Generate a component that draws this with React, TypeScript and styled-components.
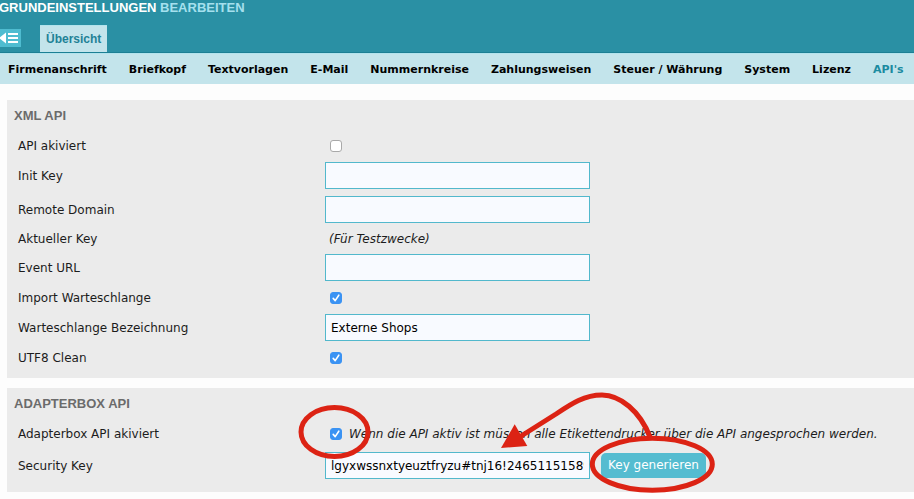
import React from "react";
import styled, { createGlobalStyle } from "styled-components";

const uiFont = `Verdana, "DejaVu Sans", sans-serif`;
const headFont = `Arial, "Liberation Sans", sans-serif`;

const GlobalStyle = createGlobalStyle`
  *, *::before, *::after { box-sizing: border-box; }
  body {
    margin: 0;
    background: #fdfdfd;
    color: #1c1c1c;
    font: 12px/16px ${uiFont};
    overflow-x: hidden;
  }
`;

const Header = styled.header`
  display: flex;
  flex-direction: column;
  gap: 10px;
  background: #2a90a4;
  border-bottom: 1px solid #1c7f94;
`;

const Title = styled.h1`
  margin: 0 0 0 -1px;
  font: bold 13px/15px ${headFont};
  color: #fff;
`;

const TitleAction = styled.span`
  color: #a5e0ee;
`;

const Toolbar = styled.div`
  display: flex;
  align-items: center;
  gap: 19px;
  height: 27px;
`;

const CollapseButton = styled.button`
  display: flex;
  width: 21px;
  height: 18px;
  margin: 0 0 1px;
  padding: 0;
  border: 0;
  background: #4fbcd0;
`;

const Tab = styled.a`
  align-self: stretch;
  padding: 0 6px;
  border: solid #b3e3ec;
  border-width: 1px 0 0;
  background: #c3e4eb;
  color: #1f8296;
  font: bold 12px/27px ${headFont};
  text-decoration: none;
`;

const SubNav = styled.nav`
  display: flex;
  gap: 22px;
  padding: 2px 8px 0;
  background: #c3e4eb;
  border-top: 1px solid #b3e3ec;
  white-space: nowrap;
`;

const NavLink = styled.a<{ $active?: boolean }>`
  color: ${(p) => (p.$active ? "#1b8ba0" : "#000")};
  font-size: 11px;
  font-weight: bold;
  line-height: 28px;
  text-decoration: none;
`;

const Content = styled.main`
  display: flex;
  flex-direction: column;
  gap: 10px;
  padding: 16px 0 7px 7px;
`;

const Panel = styled.section<{ $bottom: number }>`
  position: relative;
  padding: 0 11px ${(p) => p.$bottom}px;
  background: #ebebeb;
`;

const PanelTitle = styled.h2`
  margin: 0 -4px;
  padding-bottom: 1px;
  font: bold 13px/32px ${headFont};
  color: #6b6b6b;
`;

const rowSizes = {
  check: { height: 26, bottom: 0 },
  field: { height: 34, bottom: 1 },
  text: { height: 24, bottom: 0 },
  note: { height: 28, bottom: 2 },
};

const Row = styled.div<{ $kind: keyof typeof rowSizes }>`
  display: grid;
  grid-template-columns: 307px minmax(0, 1fr);
  align-items: center;
  min-height: ${(p) => rowSizes[p.$kind].height}px;
  padding-bottom: ${(p) => rowSizes[p.$kind].bottom}px;
`;

const Controls = styled.div`
  display: flex;
  align-items: center;
  gap: 11px;
`;

const TextInput = styled.input`
  width: 265px;
  height: 27px;
  padding: 0 5px;
  border: 1px solid #52b8cc;
  border-radius: 0;
  background: #f8faff;
  color: #000;
  font: 12px/16px ${uiFont};
`;

const CheckBox = styled.input`
  appearance: none;
  flex: none;
  width: 12px;
  height: 12px;
  margin: 0 0 0 5px;
  border: 1px solid #a9a9a9;
  border-radius: 3px;
  background: #fff;

  &:checked {
    border-color: #3b93f3;
    background: #3b93f3
      url("data:image/svg+xml,%3Csvg xmlns='http://www.w3.org/2000/svg' viewBox='0 0 10 10'%3E%3Cpath d='M2.2 5.4 4.2 7.6 7.8 2.2' fill='none' stroke='white' stroke-width='1.6' stroke-linecap='round' stroke-linejoin='round'/%3E%3C/svg%3E")
      center / 10px 10px no-repeat;
  }
`;

const Hint = styled.em<{ $beside?: boolean }>`
  margin-left: ${(p) => (p.$beside ? -4 : 4)}px;
  white-space: nowrap;
`;

const GenerateButton = styled.button`
  height: 25px;
  padding: 0 7px;
  border: 0;
  border-radius: 5px;
  background: #55bcd0;
  color: #fff;
  font: 12px/25px ${uiFont};
  white-space: nowrap;
`;

const Markup = styled.svg`
  position: absolute;
  top: 0;
  left: 283px;
  overflow: visible;
  pointer-events: none;
`;

const navItems = [
  "Firmenanschrift",
  "Briefkopf",
  "Textvorlagen",
  "E-Mail",
  "Nummernkreise",
  "Zahlungsweisen",
  "Steuer / Währung",
  "System",
  "Lizenz",
  "API's",
];

function CheckRow({ id, label, checked = false }: { id: string; label: string; checked?: boolean }) {
  return (
    <Row $kind="check">
      <label htmlFor={id}>{label}</label>
      <Controls>
        <CheckBox id={id} type="checkbox" defaultChecked={checked} />
      </Controls>
    </Row>
  );
}

function FieldRow({
  id,
  label,
  value = "",
  children,
}: {
  id: string;
  label: string;
  value?: string;
  children?: React.ReactNode;
}) {
  return (
    <Row $kind="field">
      <label htmlFor={id}>{label}</label>
      <Controls>
        <TextInput id={id} type="text" defaultValue={value} spellCheck={false} />
        {children}
      </Controls>
    </Row>
  );
}

export default function App() {
  return (
    <>
      <GlobalStyle />
      <Header>
        <Title>
          GRUNDEINSTELLUNGEN <TitleAction>BEARBEITEN</TitleAction>
        </Title>
        <Toolbar>
          <CollapseButton type="button" aria-label="Menü einklappen">
            <svg width="21" height="18" viewBox="0 0 21 18" aria-hidden="true">
              <path d="M-1 9 6 3.5v11z" fill="#fff" />
              <path d="M8 5h10M8 9h10M8 13h10" stroke="#fff" strokeWidth="2" />
            </svg>
          </CollapseButton>
          <Tab href="#uebersicht">Übersicht</Tab>
        </Toolbar>
      </Header>
      <SubNav>
        {navItems.map((item) => (
          <NavLink key={item} href="#" $active={item === "API's"}>
            {item}
          </NavLink>
        ))}
      </SubNav>
      <Content>
        <Panel $bottom={7}>
          <PanelTitle>XML API</PanelTitle>
          <CheckRow id="xml-active" label="API akiviert" />
          <FieldRow id="init-key" label="Init Key" />
          <FieldRow id="remote-domain" label="Remote Domain" />
          <Row $kind="text">
            <span>Aktueller Key</span>
            <Hint>(Für Testzwecke)</Hint>
          </Row>
          <FieldRow id="event-url" label="Event URL" />
          <CheckRow id="import-queue" label="Import Warteschlange" checked />
          <FieldRow id="queue-name" label="Warteschlange Bezeichnung" value="Externe Shops" />
          <CheckRow id="utf8-clean" label="UTF8 Clean" checked />
        </Panel>
        <Panel $bottom={9}>
          <PanelTitle>ADAPTERBOX API</PanelTitle>
          <Row $kind="note">
            <label htmlFor="adapter-active">Adapterbox API akiviert</label>
            <Controls>
              <CheckBox id="adapter-active" type="checkbox" defaultChecked />
              <Hint $beside>
                Wenn die API aktiv ist müssen alle Etikettendrucker über die API angesprochen werden.
              </Hint>
            </Controls>
          </Row>
          <FieldRow id="security-key" label="Security Key" value="lgyxwssnxtyeuztfryzu#tnj16!24651151589">
            <GenerateButton type="button">Key generieren</GenerateButton>
          </FieldRow>
          <Markup width="430" height="104" viewBox="290 388 430 104" aria-hidden="true">
            <g fill="none" stroke="#dc2314" strokeWidth="5">
              <ellipse cx="334.5" cy="432" rx="33.5" ry="24.5" />
              <ellipse cx="652.3" cy="464.2" rx="60" ry="26" />
              <path d="M650 437C640 411 620 395 602 395C584 395 571 404 556 414L518 438" />
            </g>
            <path d="M501 448 514.7 424.3 527.3 446z" fill="#dc2314" />
          </Markup>
        </Panel>
      </Content>
    </>
  );
}
